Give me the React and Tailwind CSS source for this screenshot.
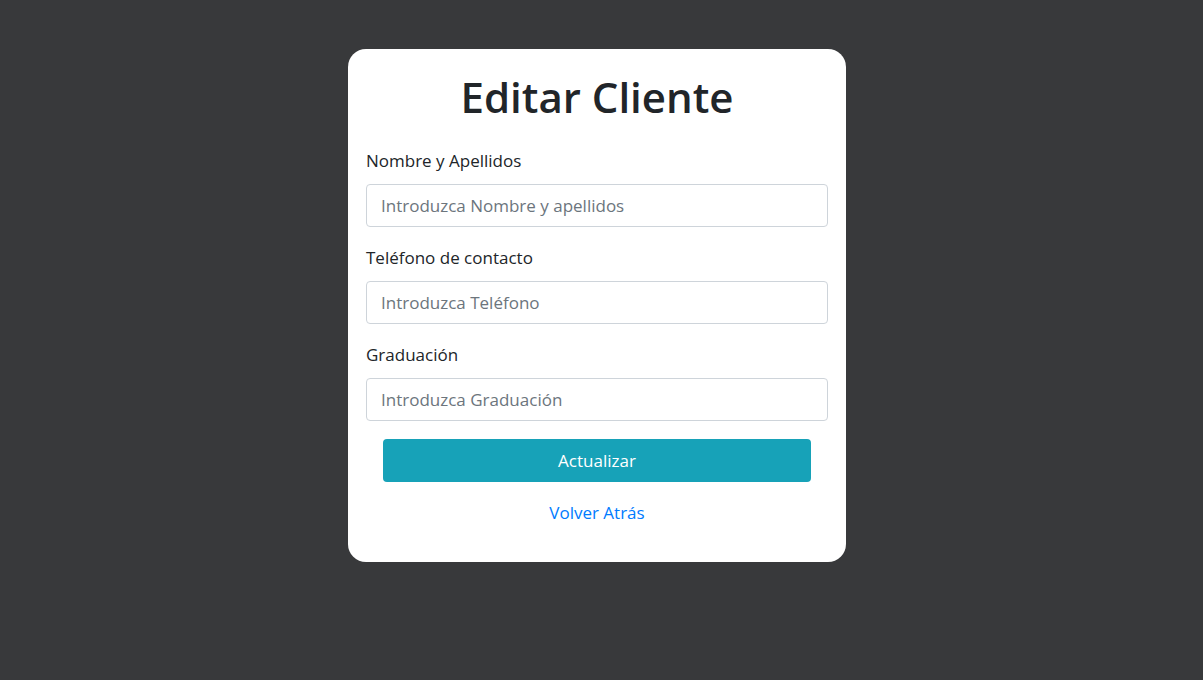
import React from "react";

const fields = [
  { label: "Nombre y Apellidos", placeholder: "Introduzca Nombre y apellidos" },
  { label: "Teléfono de contacto", placeholder: "Introduzca Teléfono" },
  { label: "Graduación", placeholder: "Introduzca Graduación" },
];

export default function App() {
  return (
    <div
      className="min-h-screen w-full bg-[#38393b] flex justify-center pt-[49px] pr-[9px]"
      style={{ fontFamily: '"Open Sans", "Noto Sans", sans-serif' }}
    >
      <div className="w-[498px] h-[513px] bg-white rounded-[18px] px-[18px] pt-[20px]">
        <h1 className="text-center text-[42px] leading-[56px] font-semibold text-[#212529] mb-[23px]">
          Editar Cliente
        </h1>
        <form onSubmit={(e) => e.preventDefault()}>
          {fields.map((f) => (
            <div key={f.label} className="mb-[18.5px]">
              <label className="block text-[17px] leading-[26px] text-[#212529] mb-[10px]">
                {f.label}
              </label>
              <input
                type="text"
                placeholder={f.placeholder}
                className="block w-full h-[42.5px] px-[14px] text-[17px] border border-[#ced4da] rounded-[4px] placeholder:text-[#6c757d] outline-none"
              />
            </div>
          ))}
          <div className="px-[17px]">
            <button
              type="submit"
              className="w-full h-[43px] bg-[#17a2b8] text-white text-[17px] rounded-[4px]"
            >
              Actualizar
            </button>
          </div>
          <div className="text-center mt-[18px]">
            <a href="#" className="text-[#007bff] text-[17px] leading-[26px]">
              Volver Atrás
            </a>
          </div>
        </form>
      </div>
    </div>
  );
}
